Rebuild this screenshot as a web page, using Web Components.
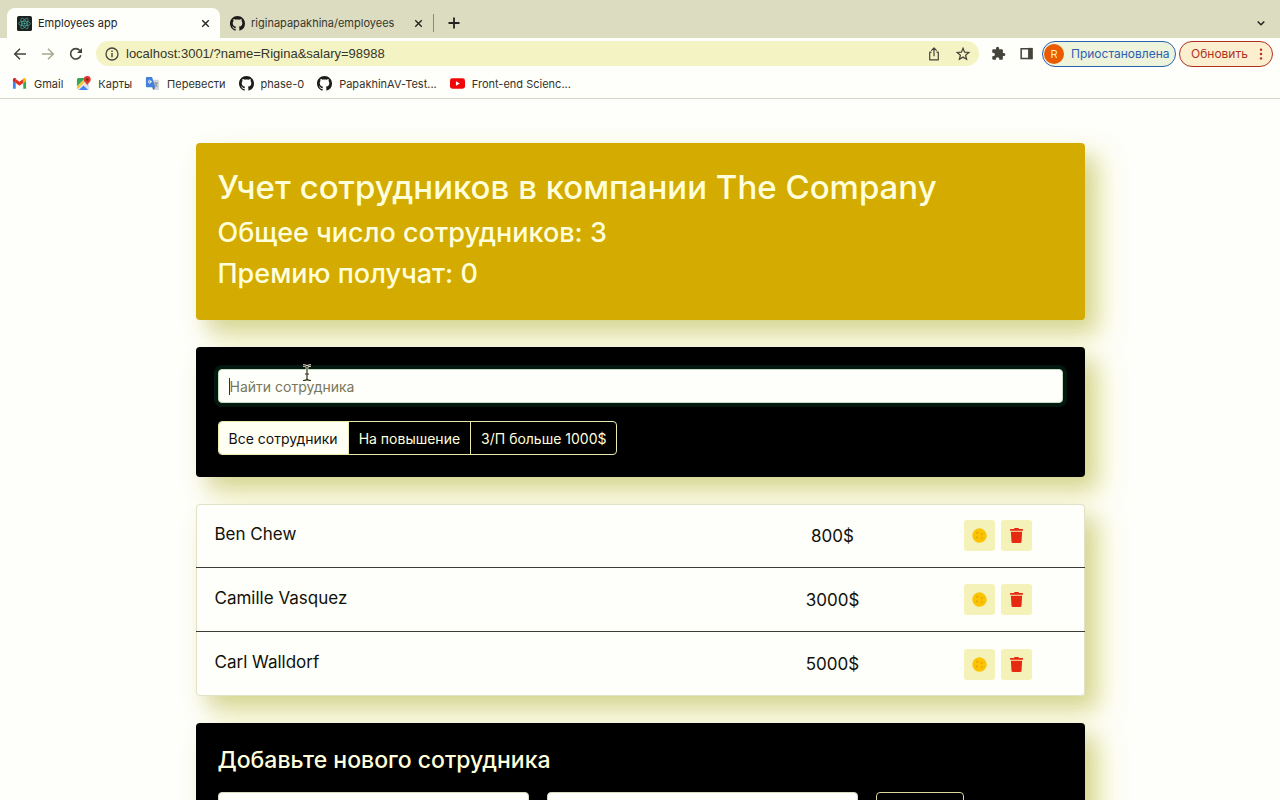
<!DOCTYPE html>
<html lang="ru">
<head>
<meta charset="utf-8">
<title>Employees app</title>
<style>
html,body{margin:0;height:100%}
body{font-family:Inter,"Noto Sans",sans-serif;color:#111108;background:#fefefa;--panel-shadow:10px 12px 20px rgba(110,110,30,.2),15px 15px 28px rgba(215,215,30,.35);--chrome:#dcdcc0}
</style>
</head>
<body>
<browser-window>
  <browser-tab slot="tab" active icon="react">Employees app</browser-tab>
  <browser-tab slot="tab" icon="github">riginapapakhina/employees</browser-tab>
  <bookmark-link slot="bookmark" icon="gmail">Gmail</bookmark-link>
  <bookmark-link slot="bookmark" icon="maps">Карты</bookmark-link>
  <bookmark-link slot="bookmark" icon="translate">Перевести</bookmark-link>
  <bookmark-link slot="bookmark" icon="github">phase-0</bookmark-link>
  <bookmark-link slot="bookmark" icon="github">PapakhinAV-Test...</bookmark-link>
  <bookmark-link slot="bookmark" icon="youtube">Front-end Scienc...</bookmark-link>
  <employees-app></employees-app>
</browser-window>
<script>
const ICONS={
react:['0 0 16 16','<rect width="16" height="16" rx="2" fill="#1c211f"/><g fill="none" stroke="#4fb5ab" stroke-width=".7"><ellipse cx="8" cy="8" rx="6.3" ry="2.5"/><ellipse cx="8" cy="8" rx="6.3" ry="2.5" transform="rotate(60 8 8)"/><ellipse cx="8" cy="8" rx="6.3" ry="2.5" transform="rotate(120 8 8)"/></g><circle cx="8" cy="8" r="1.1" fill="#4fb5ab"/>'],
github:['0 0 16 16','<path fill="#1b1b1b" d="M8 0C3.58 0 0 3.58 0 8c0 3.54 2.29 6.53 5.47 7.59.4.07.55-.17.55-.38 0-.19-.01-.82-.01-1.49-2.01.37-2.53-.49-2.69-.94-.09-.23-.48-.94-.82-1.13-.28-.15-.68-.52-.01-.53.63-.01 1.08.58 1.23.82.72 1.21 1.87.87 2.33.66.07-.52.28-.87.51-1.07-1.78-.2-3.64-.89-3.64-3.95 0-.87.31-1.59.82-2.15-.08-.2-.36-1.02.08-2.12 0 0 .67-.21 2.2.82.64-.18 1.32-.27 2-.27s1.36.09 2 .27c1.53-1.04 2.2-.82 2.2-.82.44 1.1.16 1.92.08 2.12.51.56.82 1.27.82 2.15 0 3.07-1.87 3.75-3.65 3.95.29.25.54.73.54 1.48 0 1.07-.01 1.93-.01 2.2 0 .21.15.46.55.38A8 8 0 0 0 16 8c0-4.42-3.58-8-8-8z"/>'],
gmail:['0 0 16 16','<path fill="#4285f4" d="M1 13.5h3V7.2L1 5z"/><path fill="#34a853" d="M12 13.5h3V5l-3 2.2z"/><path fill="#fbbc04" d="M12 4v3.5l3-2.3V4c0-1.6-1.8-2.4-3-1.5z"/><path fill="#e33225" d="M4 7.5V3.2l4 3 4-3v4.3l-4 3z"/><path fill="#c5221f" d="M1 4v1.2l3 2.3V2.5C2.800 1.600 1 2.400 1 4z"/>'],
maps:['0 0 16 16','<rect x="1" y="2" width="13" height="13" rx="2" fill="#e8e8dc"/><path fill="#34a853" d="M3 2h7L1 11V4c0-1.100.9-2 2-2z"/><path fill="#4285f4" d="M3 15l5-5 5 5z"/><path fill="#fbc430" d="M1 11.500l9-9 1.500 1.500L1.500 14z"/><path fill="#dfe3e6" d="M8 9l6 6V7z"/><path fill="#db3b2e" d="M12 0a3.700 3.700 0 0 0-3.700 3.700C8.300 6.500 11 7 12 10c1-3 3.700-3.500 3.700-6.300A3.700 3.700 0 0 0 12 0z"/><circle cx="12" cy="3.700" r="1.300" fill="#7e1d16"/>'],
translate:['0 0 16 16','<path fill="#d5d8d6" d="M7 4h7c.6 0 1 .4 1 1v9c0 .6-.4 1-1 1H9z"/><path fill="#4280da" d="M2 1h5.500l3.500 11H2c-.6 0-1-.4-1-1V2c0-.6.4-1 1-1z"/><path fill="#2f62b5" d="M7.500 12H11l-2 3z"/><path d="M7.300 5.800H5.200v1h1c-.2 1.300-2.600 1.300-2.600-.7 0-1.700 1.600-2 2.300-1.200" fill="none" stroke="#fff" stroke-width=".9"/><path d="M9.500 7.500h4M11.500 6.500v1M13 7.500c-.4 2-1.500 3-2.500 3.800M10.500 8.500c.7 1.400 1.700 2.400 3 3" fill="none" stroke="#657f8c" stroke-width=".8"/>'],
youtube:['0 0 16 16','<rect x="0" y="2.500" width="16" height="11" rx="2.500" fill="#f00808"/><path fill="#fff" d="M6.300 5.500v5l4.200-2.500z"/>'],
back:['0 0 16 16','<path d="M14 8H3M8 2.700L2.700 8 8 13.300" fill="none" stroke="currentColor" stroke-width="1.500"/>'],
forward:['0 0 16 16','<path d="M2 8h11M8 2.700L13.300 8 8 13.300" fill="none" stroke="currentColor" stroke-width="1.500"/>'],
reload:['0 0 16 16','<path d="M12.800 9.200A5.200 5.200 0 1 1 11.800 4.500" fill="none" stroke="currentColor" stroke-width="1.600"/><path fill="currentColor" d="M14 2v5H9z"/>'],
info:['0 0 16 16','<circle cx="8" cy="8" r="6" fill="none" stroke="currentColor" stroke-width="1.300"/><path d="M8 7v4.300M8 4.500V6" stroke="currentColor" stroke-width="1.400"/>'],
share:['0 0 16 16','<path d="M5.500 6.200H3.700v7.600h8.600V6.200h-1.800M8 10.300V2.200M5.300 4.700L8 2l2.700 2.700" fill="none" stroke="currentColor" stroke-width="1.200" stroke-linejoin="round"/>'],
star:['0 0 16 16','<path d="M8 2.300l1.600 3.900 4.200.3-3.200 2.700 1 4.100L8 11.100l-3.600 2.200 1-4.100-3.200-2.700 4.200-.3z" fill="none" stroke="currentColor" stroke-width="1.250"/>'],
puzzle:['0 0 24 24','<path fill="currentColor" d="M20.500 11H19V7c0-1.100-.9-2-2-2h-4V3.500a2.500 2.500 0 0 0-5 0V5H4c-1.100 0-1.990.9-1.990 2v3.800H3.500c1.490 0 2.700 1.210 2.700 2.700s-1.210 2.700-2.700 2.700H2V20c0 1.100.9 2 2 2h3.800v-1.500c0-1.490 1.210-2.700 2.700-2.700s2.700 1.210 2.700 2.700V22H17c1.100 0 2-.9 2-2v-4h1.500a2.500 2.500 0 0 0 0-5z"/>'],
panel:['0 0 16 16','<path d="M2.300 2.800h11.400v10.400H2.300z" fill="none" stroke="currentColor" stroke-width="1.600"/><path fill="currentColor" d="M9.700 2h4.800v12H9.700z"/>'],
dots:['0 0 16 16','<g fill="currentColor"><circle cx="8" cy="3" r="1.400"/><circle cx="8" cy="8" r="1.400"/><circle cx="8" cy="13" r="1.400"/></g>'],
close:['0 0 16 16','<path d="M4 4l8 8M12 4l-8 8" stroke="currentColor" stroke-width="1.700"/>'],
plus:['0 0 16 16','<path d="M8 2.500v11M2.500 8h11" stroke="currentColor" stroke-width="1.800"/>'],
chevron:['0 0 16 16','<path d="M4.200 6.300L8 10l3.800-3.700" fill="none" stroke="currentColor" stroke-width="1.700"/>'],
cookie:['0 0 16 16','<path fill="#fcc400" d="M5.300.7L8.200.3l2.900.8 2.700 2 1.500 2.800.4 3-1 2.700-2 2.500-2.700 1.300-3 .3-2.800-.9L2 12.700.6 9.900l-.2-2.800L1.200 4.300 3 2z"/><g fill="#eda000"><circle cx="5.500" cy="5" r="1.100"/><circle cx="5" cy="10" r="1.100"/><circle cx="10.500" cy="6.500" r="1.100"/><circle cx="10.500" cy="11" r="1.100"/></g>'],
trash:['0 0 448 512','<path fill="#e62a12" d="M432 32H312l-9.400-18.700A24 24 0 0 0 281.100 0H166.800a23.720 23.720 0 0 0-21.400 13.300L136 32H16A16 16 0 0 0 0 48v32a16 16 0 0 0 16 16h416a16 16 0 0 0 16-16V48a16 16 0 0 0-16-16zM53.200 467a48 48 0 0 0 47.900 45h245.800a48 48 0 0 0 47.900-45L416 128H32z"/>'],
ibeam:['0 0 12 18','<path d="M2 1.500c2 0 4 .5 4 2 0-1.500 2-2 4-2M6 3.500v11M2 16.500c2 0 4-.5 4-2 0 1.500 2 2 4 2M4 10h4" fill="none" stroke="#fffff0" stroke-width="2.600"/><path d="M2 1.500c2 0 4 .5 4 2 0-1.500 2-2 4-2M6 3.500v11M2 16.500c2 0 4-.5 4-2 0 1.500 2 2 4 2M4 10h4" fill="none" stroke="#33331e" stroke-width="1.200"/>']
};
const RESET=':host,*{box-sizing:border-box}button,input{font:inherit;color:inherit;margin:0}button{border:0;background:none;padding:0;display:grid;place-items:center}';
class Base extends HTMLElement{
  connectedCallback(){
    if(this.shadowRoot)return;
    this.attachShadow({mode:'open'}).innerHTML='<style>'+RESET+this.css()+'</style>'+this.html();
  }
}
customElements.define('ui-icon',class extends Base{
  css(){return ':host{display:block;flex:none;width:16px;height:16px}svg{display:block;width:100%;height:100%}'}
  html(){const [box,body]=ICONS[this.getAttribute('name')];return `<svg viewBox="${box}" aria-hidden="true">${body}</svg>`}
});
customElements.define('browser-tab',class extends Base{
  css(){return `:host{display:flex;align-items:center;gap:6px;width:213px;height:30px;padding:0 8px 0 10px;font-size:11px;color:#36362c;border-radius:8px 8px 0 0}
  :host([active]){background:#fefefa;color:#24241c}
  .t{flex:1;white-space:nowrap}ui-icon{width:15px;height:15px}button ui-icon{width:13px;height:13px}button{color:#222}`}
  html(){return `<ui-icon name="${this.getAttribute('icon')}"></ui-icon><span class="t"><slot></slot></span><button aria-label="Закрыть вкладку"><ui-icon name="close"></ui-icon></button>`}
});
customElements.define('bookmark-link',class extends Base{
  css(){return ':host{display:block}a{display:flex;align-items:center;gap:7px;color:#33332a;text-decoration:none;font-size:11px;line-height:16px;white-space:nowrap}ui-icon{width:15px;height:15px}'}
  html(){return `<a href="#"><ui-icon name="${this.getAttribute('icon')}"></ui-icon><slot></slot></a>`}
});
customElements.define('browser-window',class extends Base{
  css(){return `:host{display:flex;flex-direction:column;height:100vh;overflow:hidden}
  .tabs{display:flex;align-items:flex-end;height:38px;padding:0 12px 0 7px;background:var(--chrome);flex:none}
  .sep{width:1px;height:18px;background:#8a8a74;align-self:flex-end;margin-bottom:6px}
  .add,.more{height:30px}.add{margin-left:12px;color:#222}.more{margin-left:auto;color:#222}.more ui-icon{width:14px;height:14px}
  .bar{display:flex;align-items:center;height:31px;padding:0 7px 0 12px;flex:none;color:#44443a}
  .nav{display:flex;gap:12px;margin-right:12px}.nav button:nth-child(2){color:#a8a892}
  .omni{flex:1;display:flex;align-items:center;gap:6px;height:25px;border-radius:13px;background:#f3f3c4;padding:0 8px;margin-right:12px}
  .omni input{flex:1;min-width:0;border:0;background:none;outline:0;padding:0;font-family:"Liberation Sans",Arial,sans-serif;font-size:13px;line-height:20px;color:#36362a}
  .omni button+button{margin-left:7px}
  .ext{display:flex;gap:13px;margin-right:8px}
  .ext ui-icon{width:15px;height:15px}
  .chip{display:flex;align-items:center;height:26px;border-radius:13px;border:1px solid;font-size:12px;white-space:nowrap}
  .user{width:134px;gap:7px;padding:0 1px;background:#eef3dc;color:#2c61b0;margin-right:3px}
  .user b{display:grid;place-items:center;width:20px;height:20px;border-radius:50%;background:#ea5a00;color:#ffe9b8;font-size:11px;font-weight:400}
  .upd{width:94px;justify-content:space-between;padding:0 4px 0 11px;background:#fcefd0;color:#b03020}
  .upd ui-icon{width:14px;height:14px}
  .marks{display:flex;align-items:center;gap:13px;height:30px;padding:0 12px;border-bottom:1px solid #d6d6c4;flex:none}
  .view{flex:1;min-height:0;overflow:auto;scrollbar-width:none}`}
  html(){return `<div class="tabs"><slot name="tab"></slot><span class="sep"></span><button class="add" aria-label="Новая вкладка"><ui-icon name="plus"></ui-icon></button><button class="more" aria-label="Поиск вкладок"><ui-icon name="chevron"></ui-icon></button></div>
  <div class="bar"><div class="nav"><button aria-label="Назад"><ui-icon name="back"></ui-icon></button><button aria-label="Вперёд"><ui-icon name="forward"></ui-icon></button><button aria-label="Обновить страницу"><ui-icon name="reload"></ui-icon></button></div>
  <div class="omni"><ui-icon name="info"></ui-icon><input aria-label="Адрес" value="localhost:3001/?name=Rigina&amp;salary=98988"><button aria-label="Поделиться"><ui-icon name="share"></ui-icon></button><button aria-label="В закладки"><ui-icon name="star"></ui-icon></button></div>
  <div class="ext"><button aria-label="Расширения"><ui-icon name="puzzle"></ui-icon></button><button aria-label="Боковая панель"><ui-icon name="panel"></ui-icon></button></div>
  <button class="chip user"><b>R</b>Приостановлена</button><button class="chip upd">Обновить<ui-icon name="dots"></ui-icon></button></div>
  <nav class="marks"><slot name="bookmark"></slot></nav><div class="view"><slot></slot></div>`}
});
customElements.define('app-info',class extends Base{
  css(){return `:host{display:block;padding:22px;border-radius:4px;background:#d4ab00;color:#ffffdc;box-shadow:var(--panel-shadow)}
  h1,h2{font-weight:500;margin:0 0 7px}h1{font-size:33px;line-height:44px}h2{font-size:27px;line-height:34px}`}
  html(){return '<h1>Учет сотрудников в компании The Company</h1><h2>Общее число сотрудников: 3</h2><h2>Премию получат: 0</h2>'}
});
customElements.define('search-panel',class extends Base{
  css(){return `:host{display:block;padding:22px;border-radius:4px;background:#000;box-shadow:var(--panel-shadow)}
  .field{position:relative}
  input{display:block;width:100%;height:34px;padding:0 11px;border:1px solid #c4dcc0;border-radius:4px;background:#fefefa;font-size:14px;outline:0;box-shadow:0 0 0 4px #03180f;color:#222}
  input::placeholder{color:#77775c;opacity:1}
  .caret{position:absolute;left:11px;top:9px;width:1px;height:17px;background:#333}
  ui-icon{position:absolute;left:83px;top:-5px;width:12px;height:18px}
  .group{display:inline-flex;margin-top:18px;border:1px solid #eaeaae;border-radius:4px;overflow:hidden;vertical-align:top}
  .group button{height:32px;padding:0 10px;font-size:14px;color:#ffffdc;white-space:nowrap}
  .group button+button{border-left:1px solid #eaeaae}
  .group .on{background:#fffff4;color:#111}`}
  html(){return `<div class="field"><input type="text" placeholder="Найти сотрудника" aria-label="Найти сотрудника"><span class="caret"></span><ui-icon name="ibeam"></ui-icon></div>
  <div class="group"><button class="on">Все сотрудники</button><button>На повышение</button><button>З/П больше 1000$</button></div>`}
});
customElements.define('employee-item',class extends Base{
  css(){return `:host{display:flex;align-items:center;height:64px;padding:0 53px 0 19px;font-size:17px}
  :host(:not(:last-child)){border-bottom:1px solid #3c3c34}
  .n{flex:1;line-height:24px;padding-bottom:4px}
  input{width:178px;border:0;background:none;text-align:center;padding:0;line-height:24px;margin-right:42px}
  .b{display:flex;gap:6px}button{width:31px;height:31px;border-radius:3px;background:#f4f2b8}button ui-icon{width:15px;height:15px}`}
  html(){return `<span class="n"><slot></slot></span><input aria-label="Зарплата" value="${this.getAttribute('salary')}"><span class="b"><button aria-label="Премия"><ui-icon name="cookie"></ui-icon></button><button aria-label="Удалить"><ui-icon name="trash"></ui-icon></button></span>`}
});
customElements.define('employees-list',class extends Base{
  css(){return ':host{display:block;border-radius:4px;background:#fefefa;box-shadow:var(--panel-shadow),inset 0 0 0 1px #e2e2c8}'}
  html(){return '<slot></slot>'}
});
customElements.define('employees-add-form',class extends Base{
  css(){return `:host{display:block;padding:22px;border-radius:4px;background:#000;color:#ffffdc;box-shadow:var(--panel-shadow)}
  h3{font-weight:500;font-size:23px;line-height:30px;margin:0 0 17px}
  form{display:grid;grid-template-columns:311px 311px 88px;gap:18px}
  input{min-width:0;height:34px;padding:0 11px;border:1px solid #d8d8c0;border-radius:4px;background:#fefefa;font-size:14px;color:#222}
  button{border:1px solid #d8d8a0;border-radius:4px;font-size:14px}`}
  html(){return `<h3>Добавьте нового сотрудника</h3><form><input aria-label="Имя" type="text"><input aria-label="Зарплата" type="number"><button type="submit" aria-label="Добавить"></button></form>`}
});
customElements.define('employees-app',class extends Base{
  css(){return ':host{display:flex;flex-direction:column;gap:27px;max-width:889px;margin:0 auto;padding:44px 0}'}
  html(){return `<app-info></app-info><search-panel></search-panel><employees-list><employee-item salary="800$">Ben Chew</employee-item><employee-item salary="3000$">Camille Vasquez</employee-item><employee-item salary="5000$">Carl Walldorf</employee-item></employees-list><employees-add-form></employees-add-form>`}
});
</script>
</body>
</html>
